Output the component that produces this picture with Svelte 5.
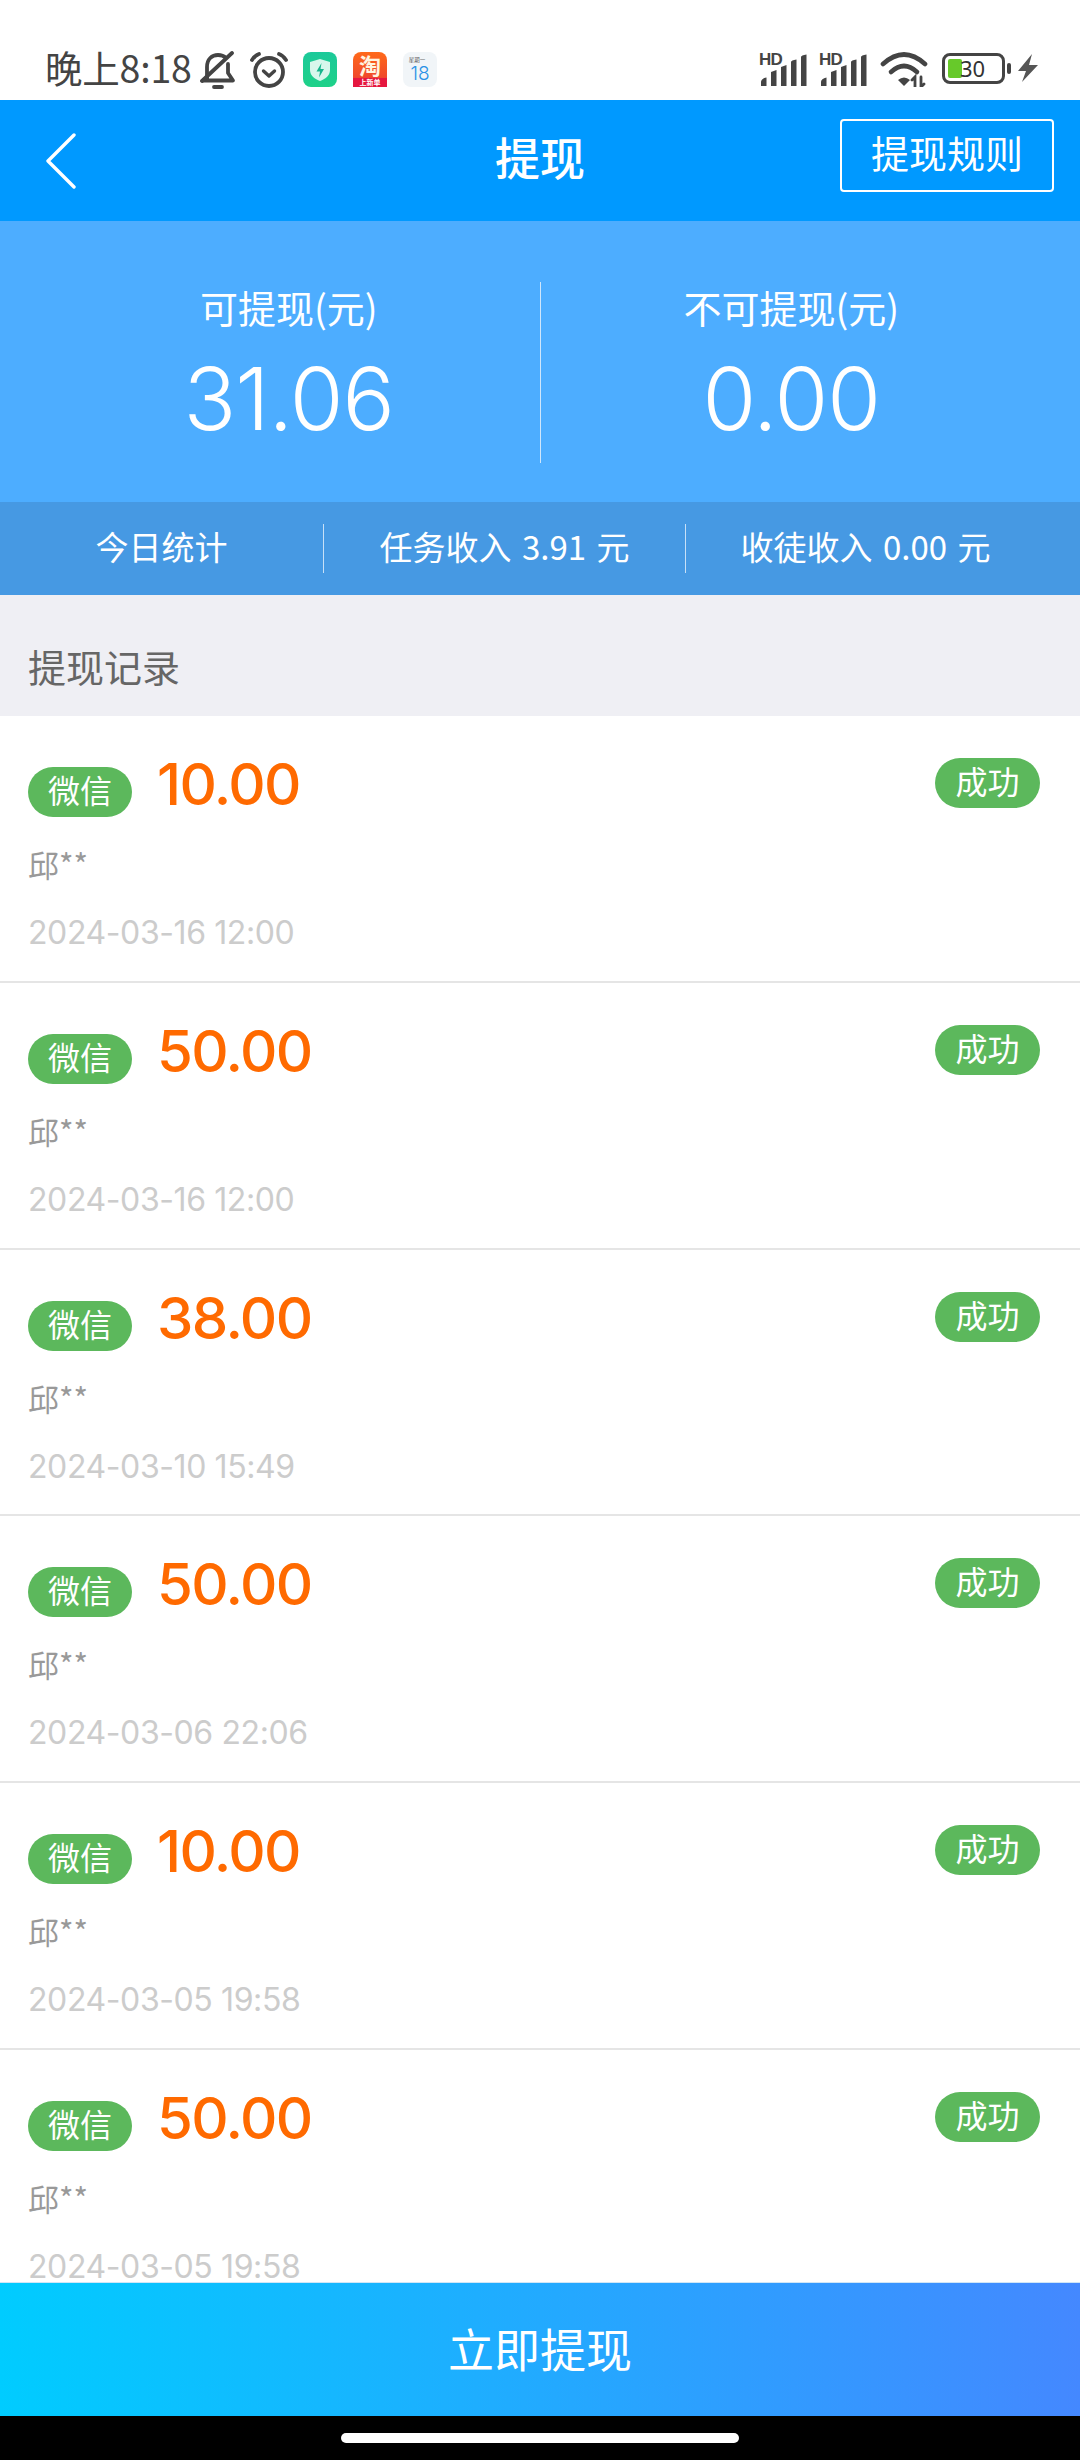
<script>
  const records = [
    { amount: '10.00', date: '2024-03-16 12:00' },
    { amount: '50.00', date: '2024-03-16 12:00' },
    { amount: '38.00', date: '2024-03-10 15:49' },
    { amount: '50.00', date: '2024-03-06 22:06' },
    { amount: '10.00', date: '2024-03-05 19:58' },
    { amount: '50.00', date: '2024-03-05 19:58' }
  ]
</script>

<div class="page">
  <div class="status-bar">
    <div class="status-left">
      <span class="clock">晚上8:18</span>
      <svg class="ic-bell" viewBox="0 0 36 38" fill="none" stroke="#444" stroke-width="3.800" stroke-linecap="round" stroke-linejoin="round">
        <path d="M7 27V16C7 8 12 4 18 4c3 0 6 1 8 3" />
        <path d="M28 13v9l5 7.500H3L7 27" />
        <path d="M2 30 L32 2" />
        <path d="M14 36h8" />
      </svg>
      <svg class="ic-alarm" viewBox="0 0 38 36" fill="none" stroke="#444" stroke-linecap="round" stroke-linejoin="round">
        <circle cx="19" cy="20" r="14" stroke-width="3.800" />
        <path d="M13.500 19l5.500 5 5.500-5" stroke-width="3.400" />
        <path d="M2 8c2-3 4-5 7-6M36 8c-2-3-4-5-7-6" stroke-width="3.800" />
      </svg>
      <svg class="app-icon" viewBox="0 0 34 35">
        <defs>
          <linearGradient id="guard" x1="0" y1="0" x2="0" y2="1">
            <stop offset="0" stop-color="#1cc99a" />
            <stop offset="1" stop-color="#1ed188" />
          </linearGradient>
        </defs>
        <rect width="34" height="35" rx="8" fill="url(#guard)" />
        <path d="M17 7l10 3v8c0 6-5 9-10 11-5-2-10-5-10-11v-8z" fill="#d8f7ec" />
        <path d="M18.500 11l-5 8.500h3.500l-1 6 5-8.500h-3.500z" fill="#17b58c" />
      </svg>
      <svg class="app-icon" viewBox="0 0 34 35">
        <defs>
          <linearGradient id="tao" x1="0" y1="0" x2="0" y2="1">
            <stop offset="0" stop-color="#ff6a1a" />
            <stop offset="0.7" stop-color="#f04a2a" />
            <stop offset="1" stop-color="#e8204a" />
          </linearGradient>
        </defs>
        <rect width="34" height="35" rx="8" fill="url(#tao)" />
        <rect y="26" width="34" height="9" fill="#e5173f" />
        <text x="17" y="21.500" text-anchor="middle" font-size="22" font-weight="700" fill="#fff5e0">淘</text>
        <text x="17" y="33" text-anchor="middle" font-size="7" font-weight="700" fill="#fff">上新单</text>
      </svg>
      <svg class="app-icon" viewBox="0 0 34 35">
        <rect width="34" height="35" rx="8" fill="#f1f5f8" />
        <text x="14" y="9.500" text-anchor="middle" font-size="5.500" fill="#555">星期一</text>
        <text x="17" y="28" text-anchor="middle" font-size="19" fill="#2a92e6" class="cal-num">18</text>
      </svg>
    </div>
    <div class="status-right">
      {#each [0, 1] as sim}
        <div class="signal">
          <span class="hd">HD</span>
          <svg viewBox="0 0 50 33" fill="#444">
            <path d="M3 33v-4c0-2 2-4 5.500-4.500V33zM13 33V19l5.500-2v16zM23 33V14l5.500-2v21zM33 33V9c0-1 2-2 5.500-2.500V33zM43 33V4c0-1 2-2 5.500-2.500V33z" />
          </svg>
        </div>
      {/each}
      <svg class="ic-wifi" viewBox="0 0 48 36" fill="none" stroke="#444" stroke-width="4.600" stroke-linecap="round">
        <path d="M3 13Q24 -6 45 13" />
        <path d="M11 21Q24 9 37 21" />
        <path d="M18 29Q24 24 30 29L24 35Z" fill="#444" stroke="none" />
        <path d="M35 36V26L32 29" stroke-width="2.800" />
        <path d="M41 26V36L44 33" stroke-width="2.800" />
      </svg>
      <div class="battery">
        <div class="battery-body">
          <div class="battery-fill"></div>
          <span class="battery-num">30</span>
        </div>
        <div class="battery-nub"></div>
      </div>
      <svg class="ic-bolt" viewBox="0 0 20 28" fill="#555"><path d="M14 0L0 17h8l-4 11 16-17h-9z" /></svg>
    </div>
  </div>

  <div class="nav">
    <svg class="back" viewBox="0 0 30 56" fill="none" stroke="#fff" stroke-width="3.400" stroke-linecap="round" stroke-linejoin="round">
      <path d="M28 2L2 28l26 26" />
    </svg>
    <span class="nav-title">提现</span>
    <button class="rule-btn">提现规则</button>
  </div>

  <div class="summary">
    <div class="summary-col">
      <div class="summary-label">可提现(元)</div>
      <div class="summary-value">31.06</div>
    </div>
    <div class="summary-col with-line">
      <div class="summary-label">不可提现(元)</div>
      <div class="summary-value">0.00</div>
    </div>
  </div>

  <div class="stats">
    <div class="stats-cell">今日统计</div>
    <div class="stats-cell">任务收入 3.91 元</div>
    <div class="stats-cell">收徒收入 0.00 元</div>
  </div>

  <div class="section-title">提现记录</div>

  <div class="list">
    {#each records as r}
      <div class="record">
        <div class="record-head">
          <span class="pill channel">微信</span>
          <span class="amount">{r.amount}</span>
          <span class="pill state">成功</span>
        </div>
        <div class="name">邱**</div>
        <div class="date">{r.date}</div>
      </div>
    {/each}
  </div>

  <button class="withdraw">立即提现</button>

  <div class="home-bar"><div class="home-pill"></div></div>
</div>

<style>
  :global(body) {
    margin: 0;
    background: #fff;
  }
  .page {
    width: 1080px;
    height: 2460px;
    display: flex;
    flex-direction: column;
    overflow: hidden;
    font-family: "Noto Sans CJK SC", "Noto Sans", sans-serif;
    background: #fff;
  }
  svg text {
    font-family: "Noto Sans CJK SC", sans-serif;
  }
  .cal-num {
    font-family: Inter, sans-serif;
    font-weight: 300;
  }

  /* status bar */
  .status-bar {
    height: 100px;
    flex-shrink: 0;
    display: flex;
    justify-content: space-between;
    box-sizing: border-box;
    padding: 50px 42px 0 45px;
    color: #444;
  }
  .status-left {
    display: flex;
    align-items: flex-start;
  }
  .clock {
    font-size: 37.500px;
    line-height: 34px;
    width: 155px;
    letter-spacing: -0.2px;
    white-space: nowrap;
  }
  .ic-bell {
    width: 36px;
    height: 38px;
    margin-top: 1px;
  }
  .ic-alarm {
    width: 38px;
    height: 36px;
    margin: 2px 15px 0 14px;
  }
  .app-icon {
    width: 34px;
    height: 35px;
    margin: 2px 16px 0 0;
  }
  .status-right {
    display: flex;
    align-items: flex-start;
  }
  .signal {
    position: relative;
    width: 50px;
    height: 34px;
    margin-top: 3px;
    margin-right: 10px;
  }
  .signal svg {
    width: 50px;
    height: 33px;
    display: block;
  }
  .hd {
    position: absolute;
    left: 1px;
    top: -2px;
    font-family: "Liberation Sans", sans-serif;
    font-size: 17px;
    line-height: 18px;
    font-weight: 700;
    letter-spacing: -0.8px;
    color: #444;
  }
  .ic-wifi {
    width: 48px;
    height: 36px;
    margin-top: 1px;
    margin-left: 2px;
  }
  .battery {
    display: flex;
    align-items: center;
    margin: 3px 0 0 14px;
  }
  .battery-body {
    width: 63px;
    height: 31px;
    box-sizing: border-box;
    border: 3px solid #444;
    border-radius: 8px;
    display: flex;
    align-items: center;
    position: relative;
    padding: 3px;
  }
  .battery-fill {
    width: 14px;
    height: 100%;
    background: #67c92a;
    border-radius: 2px;
  }
  .battery-num {
    position: absolute;
    left: 15px;
    top: 0;
    font-family: "Noto Sans", sans-serif;
    font-size: 22px;
    line-height: 25px;
    color: #333;
  }
  .battery-nub {
    width: 4px;
    height: 11px;
    margin-left: 2px;
    background: #444;
    border-radius: 2px;
  }
  .ic-bolt {
    width: 20px;
    height: 28px;
    margin: 4px 0 0 7px;
  }

  /* nav */
  .nav {
    height: 121px;
    flex-shrink: 0;
    background: #0099ff;
    display: flex;
    align-items: flex-start;
    position: relative;
    color: #fff;
  }
  .back {
    width: 30px;
    height: 56px;
    margin: 33px 0 0 46px;
  }
  .nav-title {
    position: absolute;
    left: 0;
    right: 0;
    top: 27px;
    text-align: center;
    font-size: 45px;
    line-height: 60px;
    font-weight: 500;
  }
  .rule-btn {
    margin: 19px 26px 0 auto;
    width: 214px;
    height: 73px;
    box-sizing: border-box;
    background: transparent;
    border: 2px solid #fff;
    border-radius: 4px;
    color: #fff;
    font-family: inherit;
    font-size: 38px;
    line-height: 50px;
    padding: 0 0 7px;
  }

  /* summary */
  .summary {
    height: 281px;
    flex-shrink: 0;
    box-sizing: border-box;
    padding: 61px 38px 0;
    background: #4dadff;
    color: #fff;
    display: flex;
    align-items: flex-start;
  }
  .summary-col {
    flex: 1;
    height: 181px;
    box-sizing: border-box;
    text-align: center;
  }
  .with-line {
    border-left: 1px solid #cfe6fb;
  }
  .summary-label {
    font-size: 38px;
    line-height: 50px;
  }
  .summary-value {
    font-family: Inter, sans-serif;
    font-size: 87px;
    line-height: 100px;
    font-weight: 350;
    letter-spacing: -1px;
    margin-top: 17px;
  }

  /* stats */
  .stats {
    height: 93px;
    flex-shrink: 0;
    box-sizing: border-box;
    padding: 22px 35px 0 0;
    background: #4699e3;
    color: #fff;
    display: grid;
    grid-template-columns: 323px 362px 1fr;
    align-items: start;
  }
  .stats-cell {
    height: 49px;
    line-height: 45px;
    font-size: 33px;
    word-spacing: 3px;
    text-align: center;
    white-space: nowrap;
  }
  .stats-cell + .stats-cell {
    border-left: 1px solid #c7e0f7;
  }

  /* section */
  .section-title {
    height: 121px;
    flex-shrink: 0;
    box-sizing: border-box;
    padding: 43px 0 0 28px;
    background: #efeff4;
    color: #666;
    font-size: 38px;
    line-height: 56px;
  }

  /* list */
  .list {
    flex: 1;
    min-height: 0;
    overflow: hidden;
    background: #fff;
  }
  .record {
    height: 266.750px;
    box-sizing: border-box;
    padding: 42px 40px 0 28px;
    border-bottom: 2px solid #e5e5e5;
  }
  .record-head {
    display: flex;
    align-items: flex-start;
    height: 59px;
  }
  .pill {
    height: 50px;
    border-radius: 25px;
    background: #5cb85c;
    color: #fff;
    font-size: 32px;
    line-height: 45px;
    text-align: center;
    flex-shrink: 0;
  }
  .channel {
    width: 104px;
    margin-top: 9px;
  }
  .state {
    width: 105px;
    margin-left: auto;
  }
  .amount {
    margin: -4px 0 0 25px;
    font-family: Inter, sans-serif;
    font-size: 58px;
    line-height: 60px;
    font-weight: 450;
    letter-spacing: -1.600px;
    color: #ff6a00;
  }
  .name {
    margin-top: 27px;
    font-size: 31px;
    line-height: 40px;
    color: #999;
  }
  .date {
    margin-top: 29px;
    font-family: Inter, sans-serif;
    font-size: 32px;
    line-height: 40px;
    letter-spacing: -0.400px;
    color: #ccc;
  }

  /* bottom */
  .withdraw {
    height: 134px;
    flex-shrink: 0;
    width: 100%;
    border: none;
    border-top: 1px solid #cfe6f7;
    background: linear-gradient(90deg, #00ccff, #4488ff);
    background-origin: border-box;
    color: #fff;
    font-family: inherit;
    font-size: 46px;
    padding: 0 0 6px;
  }
  .home-bar {
    height: 44px;
    flex-shrink: 0;
    background: #000;
    display: flex;
    justify-content: center;
    padding-top: 17px;
    box-sizing: border-box;
  }
  .home-pill {
    width: 398px;
    height: 10px;
    background: #fff;
    border-radius: 5px;
  }
</style>
